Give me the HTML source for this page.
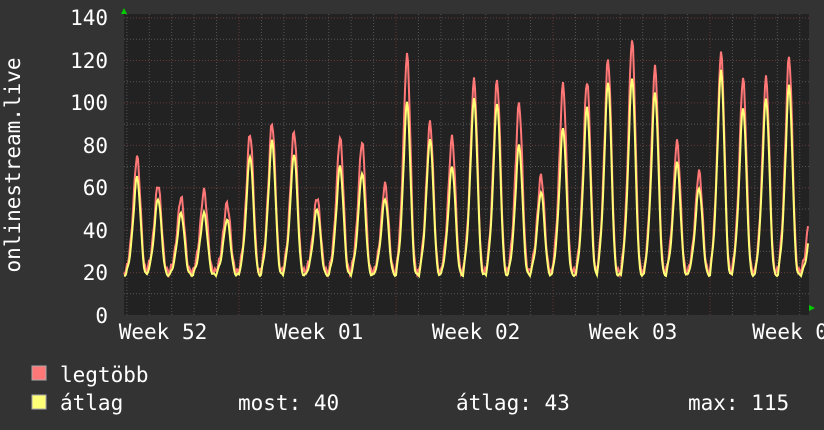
<!DOCTYPE html>
<html><head><meta charset="utf-8"><style>
html,body{margin:0;padding:0;background:#333;}
body{width:824px;height:430px;overflow:hidden;position:relative;font-family:"DejaVu Sans Mono","Liberation Mono",monospace;color:#fff;}
svg{position:absolute;left:0;top:0}
</style></head><body>
<svg id="g" width="824" height="430" xmlns="http://www.w3.org/2000/svg" font-family="DejaVu Sans Mono, Liberation Mono, monospace" fill="#fff">
<rect x="124" y="14" width="685" height="301" fill="#222"/>
<g id="grid"></g>
<g id="data"></g>
<path d="M121 14 L124 8 L127 14Z" fill="#0c0"/>
<path d="M809 305 L815 308 L809 311Z" fill="#0c0"/>
<g font-size="21" text-anchor="end">
<text x="108" y="25">140</text><text x="108" y="68">120</text><text x="108" y="110">100</text>
<text x="108" y="153">80</text><text x="108" y="195">60</text><text x="108" y="238">40</text>
<text x="108" y="280">20</text><text x="108" y="323">0</text>
</g>
<g font-size="21" text-anchor="middle">
<text x="163" y="339">Week 52</text><text x="319" y="339">Week 01</text>
<text x="476" y="339">Week 02</text><text x="633" y="339">Week 03</text>
<text x="790" y="339">Week 0</text>
</g>
<text font-size="21" transform="translate(20,165) rotate(-90)" text-anchor="middle">onlinestream.live</text>
<rect x="32" y="366" width="14" height="14" fill="#f77" stroke="#aaa"/>
<rect x="32" y="395" width="14" height="14" fill="#ff7" stroke="#aaa"/>
<g font-size="21">
<text x="60" y="382">legtöbb</text>
<text x="60" y="410">átlag</text>
<text x="238" y="410">most: 40</text>
<text x="456" y="410">átlag: 43</text>
<text x="688" y="410">max: 115</text>
</g>
</svg>
<script>
function Y(v){return 315-v*2.121;}
var grid=document.getElementById('grid'),s='';
for(var v=10;v<=140;v+=10){var y=Y(v);s+='<line x1="124" x2="809" y1="'+y+'" y2="'+y+'" stroke="'+(v%20==0?'#6a3a3a':'#555')+'" stroke-dasharray="1,2"/>';}
for(var k=-5;k<40;k++){var x=239+k*22.43;if(x<125||x>808)continue;var maj=(((k%7)+7)%7)==0;
s+='<line y1="14" y2="315" x1="'+x+'" x2="'+x+'" stroke="'+(maj?'#6a3a3a':'#555')+'" stroke-dasharray="1,2"/>';}
grid.innerHTML=s;
var pk=[[137,65,73],[158,55,60],[181,48,54],[204,48,57],[227,45,51],[250,75,84],[272,82,89],[294,76,85],[317,50,54],[340,70,82],[362,67,80],[385,55,60],[407,100,121],[430,83,89],[452,70,82],[474,102,109],[497,100,109],[519,80,98],[541,58,64],[563,88,107],[587,98,109],[608,110,119],[632,112,128],[655,105,115],[677,72,80],[699,60,66],[721,115,122],[743,98,110],[766,102,110],[789,108,120],[812,45,60]];
function val(x,i){var v=19;for(var j=0;j<pk.length;j++){var d=x-pk[j][0];var h=pk[j][i]-19;
if(Math.abs(d)<11){var c=Math.cos(Math.PI*d/22);v+=h*c*c*c*c;}
if(d>-11&&d<-3){v+=h*0.12*Math.sin(Math.PI*(d+11)/8);}}
return v+(i==2?1.5+Math.sin(x*1.7)*1.5:Math.sin(x*1.3)*0.6);}
function path(i){var p='';for(var x=124;x<=808;x+=1){p+=(x==124?'M':'L')+x+' '+Y(val(x,i)).toFixed(1);}return p;}
document.getElementById('data').innerHTML='<path d="'+path(2)+'" fill="none" stroke="#f77" stroke-width="2"/><path d="'+path(1)+'" fill="none" stroke="#ff7" stroke-width="2"/>';
</script>
</body></html>
